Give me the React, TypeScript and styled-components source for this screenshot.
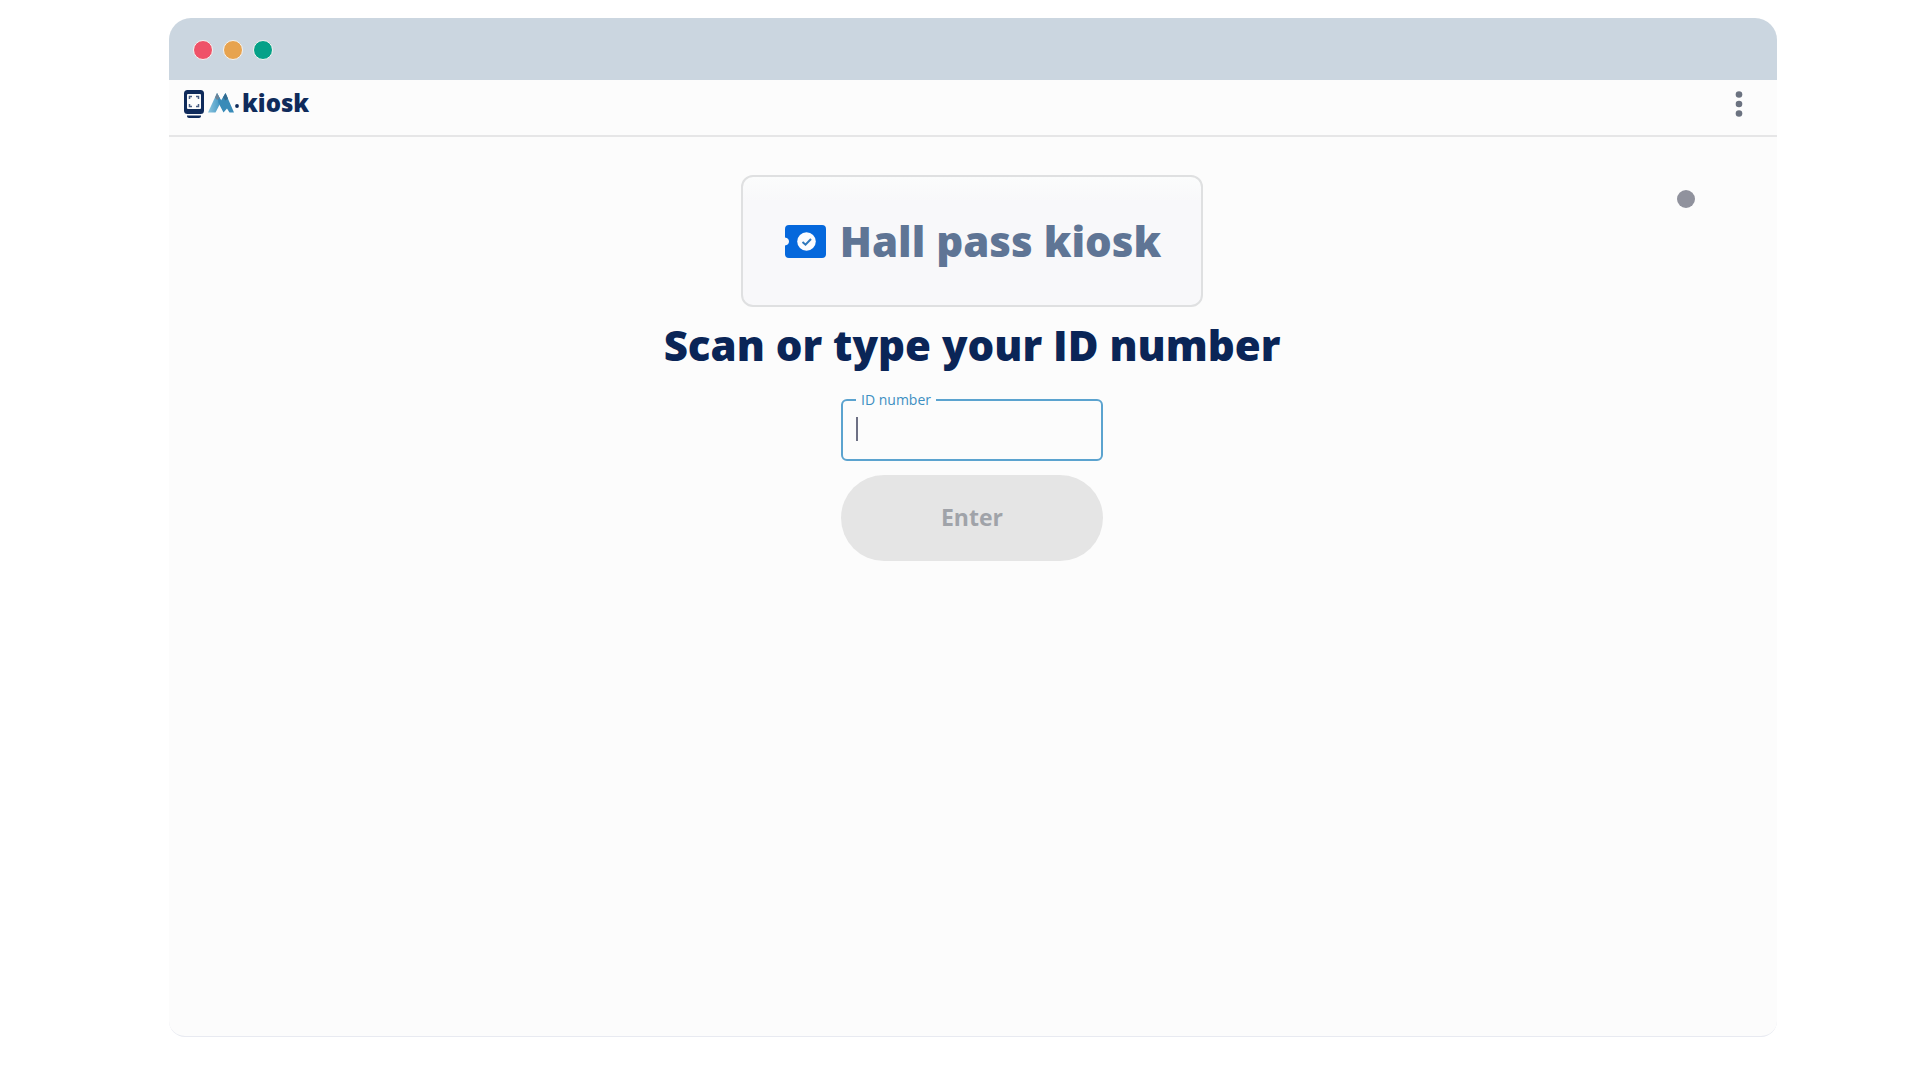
import React, { useState } from "react";
import styled, { createGlobalStyle } from "styled-components";

const GlobalStyle = createGlobalStyle`
  *, *::before, *::after { box-sizing: border-box; }
  body {
    margin: 0;
    background: #ffffff;
    font-family: "Open Sans", "Noto Sans", sans-serif;
    color: #0a2557;
  }
`;

const Page = styled.div`
  display: flex;
  min-height: 100vh;
  padding: 18px 143px 43px 169px;
`;

const BrowserWindow = styled.div`
  display: flex;
  flex: 1;
  flex-direction: column;
  overflow: hidden;
  border-radius: 22px 22px 16px 16px;
  border-bottom: 1px solid #e8eaf1;
  background: #fcfcfc;
`;

const TitleBar = styled.div`
  display: flex;
  align-items: center;
  gap: 10px;
  height: 62px;
  padding: 2px 24px 0;
  background: #cbd6e0;
`;

const Light = styled.span<{ $color: string }>`
  width: 20px;
  height: 20px;
  border: 1px solid #f5f3f0;
  border-radius: 50%;
  background: ${(p) => p.$color};
`;

const AppHeader = styled.header`
  display: flex;
  align-items: center;
  justify-content: space-between;
  height: 57px;
  padding: 0 24px 8px 14px;
  border-bottom: 2px solid #e6e6e7;
`;

const Brand = styled.a`
  display: flex;
  align-items: center;
  color: #0f2b5b;
  font-size: 24px;
  font-weight: 800;
  line-height: 28px;
  text-decoration: none;
`;

const BrandName = styled.span`
  padding-bottom: 2px;
`;

const MenuButton = styled.button`
  display: flex;
  align-items: center;
  justify-content: center;
  width: 28px;
  height: 32px;
  padding: 0;
  border: 0;
  background: transparent;
  color: #6b7280;
  cursor: pointer;
`;

const Main = styled.main`
  position: relative;
  display: flex;
  flex: 1;
  flex-direction: column;
  align-items: center;
  padding: 38px 26px 24px 24px;
`;

const KioskCard = styled.section`
  display: flex;
  align-items: center;
  justify-content: center;
  gap: 14px;
  min-height: 132px;
  padding: 0 40px 0 42px;
  border: 2px solid #dfe0e1;
  border-radius: 12px;
  background: linear-gradient(#fbfcfc, #f8f8fa 24px);
`;

const CardTitle = styled.h1`
  margin: 0;
  color: #5f7595;
  font-size: 42px;
  font-weight: 800;
  line-height: 56px;
`;

const Prompt = styled.h2`
  margin: 10px 0 20px;
  font-size: 42px;
  font-weight: 800;
  line-height: 56px;
`;

const EntryForm = styled.form`
  display: flex;
  flex-direction: column;
  gap: 14px;
  width: 262px;
`;

const Field = styled.fieldset`
  display: flex;
  align-items: center;
  min-width: 0;
  height: 68px;
  margin: 0;
  padding: 2px 13px 0;
  border: 2px solid #5ba3cf;
  border-radius: 6px;
`;

const FieldLabel = styled.legend`
  padding: 0 5px;
  color: #3d8fc2;
  font-size: 14px;
  font-weight: 500;
  line-height: 14px;
`;

const Caret = styled.span`
  flex: none;
  width: 2px;
  height: 24px;
  background: #6d7084;
`;

const IdInput = styled.input`
  flex: 1;
  min-width: 0;
  height: 40px;
  padding: 0;
  border: 0;
  outline: 0;
  background: transparent;
  color: #0a2557;
  font: 20px "Open Sans", sans-serif;
`;

const EnterButton = styled.button`
  height: 86px;
  padding: 0 0 2px;
  border: 0;
  border-radius: 43px;
  background: #e5e5e5;
  color: #a0a3a9;
  font: 700 23px "Open Sans", sans-serif;
`;

const Pointer = styled.span`
  position: absolute;
  top: 53px;
  right: 82px;
  width: 18px;
  height: 18px;
  border-radius: 50%;
  background: #90929d;
`;

const KioskIcon = () => (
  <svg width="22" height="30" viewBox="0 0 22 30" aria-hidden="true">
    <rect x="1" y="1" width="20" height="24" rx="3.500" fill="#0f2b5b" />
    <rect x="4" y="5" width="14" height="15" rx="1" fill="#fcfcfc" />
    <path
      d="M6.500 10V7.500H9M13 7.500h2.500V10M6.500 15v2.500H9M13 17.500h2.500V15"
      fill="none"
      stroke="#4a5f84"
      strokeWidth="1.500"
    />
    <path d="M4 26.500h14v.5c0 1.200-.8 2-2 2H6c-1.200 0-2-.8-2-2z" fill="#0f2b5b" />
  </svg>
);

const MountainMark = () => (
  <svg width="37" height="26" viewBox="0 0 37 26" aria-hidden="true">
    <defs>
      <linearGradient id="peak" x1="0" y1="0" x2="1" y2="0">
        <stop offset="0" stopColor="#8cc5df" />
        <stop offset="1" stopColor="#3d93c0" />
      </linearGradient>
    </defs>
    <path d="M3 21.500 12 2l4.500 8-6 11.500z" fill="url(#peak)" />
    <path d="m12 2 4 7.500L20.500 2l8.500 19.500h-4.500l-2.500-4-3.500 4-5-9.500z" fill="#398bb8" />
    <path d="m10 6.500 2-4.500 2.500 5-2.500 2z" fill="#6d8396" />
    <path d="m18 6.500 2.500-4.500 2.500 5.500-2.500 2z" fill="#326b91" />
    <circle cx="32" cy="15" r="1.900" fill="#0f2b5b" />
  </svg>
);

const TicketIcon = () => (
  <svg width="41" height="33" viewBox="0 0 41 33" aria-hidden="true">
    <path
      d="M4 0h33a4 4 0 0 1 4 4v25a4 4 0 0 1-4 4H4a4 4 0 0 1-4-4v-8.500c2.500-.3 4-2 4-4s-1.500-3.700-4-4V4a4 4 0 0 1 4-4z"
      fill="#0568dc"
    />
    <circle cx="21.500" cy="16.500" r="9.300" fill="#fbfcff" />
    <path d="m17.500 17 3 2.700 5.500-5.700" fill="none" stroke="#2f78bd" strokeWidth="2" />
  </svg>
);

const DotsIcon = () => (
  <svg width="8" height="28" viewBox="0 0 8 28" fill="currentColor" aria-hidden="true">
    <circle cx="4" cy="4.500" r="3.300" />
    <circle cx="4" cy="14" r="3.300" />
    <circle cx="4" cy="23.500" r="3.300" />
  </svg>
);

export default function App() {
  const [idNumber, setIdNumber] = useState("");

  return (
    <>
      <GlobalStyle />
      <Page>
        <BrowserWindow>
          <TitleBar>
            <Light $color="#ef5268" />
            <Light $color="#e7a34f" />
            <Light $color="#05a188" />
          </TitleBar>
          <AppHeader>
            <Brand href="#">
              <KioskIcon />
              <MountainMark />
              <BrandName>kiosk</BrandName>
            </Brand>
            <MenuButton type="button" aria-label="Menu">
              <DotsIcon />
            </MenuButton>
          </AppHeader>
          <Main>
            <KioskCard>
              <TicketIcon />
              <CardTitle>Hall pass kiosk</CardTitle>
            </KioskCard>
            <Prompt>Scan or type your ID number</Prompt>
            <EntryForm onSubmit={(e) => e.preventDefault()}>
              <Field>
                <FieldLabel>
                  <label htmlFor="id-number">ID number</label>
                </FieldLabel>
                {idNumber === "" && <Caret />}
                <IdInput
                  id="id-number"
                  autoComplete="off"
                  value={idNumber}
                  onChange={(e) => setIdNumber(e.target.value)}
                />
              </Field>
              <EnterButton type="submit" disabled={idNumber === ""}>
                Enter
              </EnterButton>
            </EntryForm>
            <Pointer />
          </Main>
        </BrowserWindow>
      </Page>
    </>
  );
}
